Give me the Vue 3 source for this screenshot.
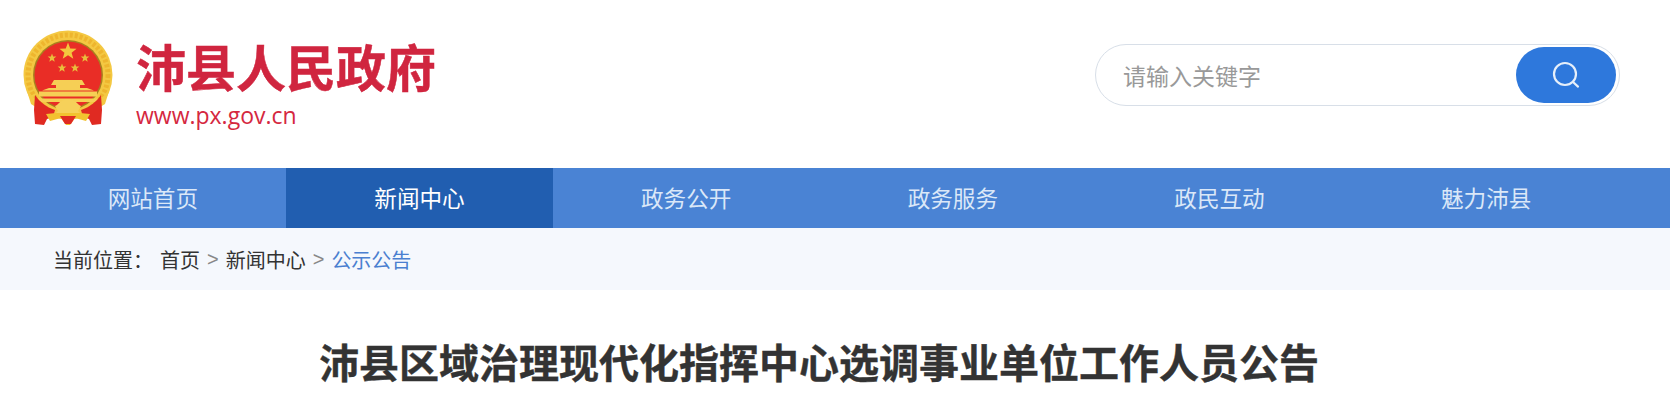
<template>
  <div class="page">
    <header class="top">
      <div class="brand">
        <svg class="emblem" viewBox="0 0 90 96" width="90" height="96">
          <circle cx="45" cy="45" r="44.5" fill="#f4c842" />
          <circle cx="45" cy="45" r="40" fill="none" stroke="#eeb52e" stroke-width="5" stroke-dasharray="3 2" />
          <circle cx="45" cy="45" r="35" fill="#a8801f" />
          <circle cx="45" cy="45" r="33.5" fill="#e92d26" />
          <polygon fill="#f3c63e" :points="starPoints(45, 21.5, 9)" />
          <polygon v-for="s in smallStars" :key="s.x" fill="#e9bd3c" :points="starPoints(s.x, s.y, 4.6)" />
          <path fill="#f6cf55" d="M31 50h28l3 5h-5v3h7l7 2.5H19L26 58h7v-3h-5z" />
          <rect x="16" y="61.5" width="58" height="5" fill="#f6cf55" />
          <rect x="14" y="68.5" width="62" height="3.5" fill="#f6cf55" />
          <path fill="#f4c842" d="M3 58c9 13 19 20 31 22h22c12-2 22-9 31-22l-5 16-16 10H24L8 74z" />
          <path fill="#e02a22" d="M12 65c5 7 11 12 20 15l-2 7-6 2-3 6-9-1-1-14z" />
          <path fill="#e02a22" d="M78 65c-5 7-11 12-20 15l2 7 6 2 3 6 9-1 1-14z" />
          <path fill="#f6d15a" d="M32 76c3-1 4-4 7-5 2-2 10-2 12 0 3 1 4 4 7 5l-3 5 2 2H33l2-2z" />
          <path fill="#f2c230" d="M23 84l10-1h24l10 1-4 7-11-3-5 7h-4l-5-7-11 3z" />
          <path fill="#e02a22" d="M37 86h16l-5 8h-6z" />
        </svg>
        <div class="brand-text">
          <div class="site-name">沛县人民政府</div>
          <div class="site-url">www.px.gov.cn</div>
        </div>
      </div>
      <form class="search" @submit.prevent>
        <input v-model="keyword" class="search-input" type="text" placeholder="请输入关键字" />
        <button class="search-btn" type="submit" aria-label="搜索">
          <svg viewBox="0 0 28 28" width="28" height="28" fill="none" stroke="#e6effa" stroke-width="2.2" stroke-linecap="round">
            <circle cx="13" cy="13" r="11" />
            <path d="M21 21l5 4.6" />
          </svg>
        </button>
      </form>
    </header>

    <nav class="nav">
      <ul class="nav-list">
        <li v-for="item in navItems" :key="item" class="nav-item" :class="{ active: item === current }">{{ item }}</li>
      </ul>
    </nav>

    <div class="crumbs">
      <div class="crumbs-inner">
        <span class="crumb-label">当前位置：</span>
        <span>首页</span>
        <span class="sep">&gt;</span>
        <span>新闻中心</span>
        <span class="sep">&gt;</span>
        <span class="crumb-last">公示公告</span>
      </div>
    </div>

    <h1 class="title">沛县区域治理现代化指挥中心选调事业单位工作人员公告</h1>
  </div>
</template>

<script setup>
import { ref } from 'vue'

const keyword = ref('')
const current = '新闻中心'
const navItems = ['网站首页', '新闻中心', '政务公开', '政务服务', '政民互动', '魅力沛县']
const smallStars = [
  { x: 29, y: 28 },
  { x: 62, y: 28 },
  { x: 39, y: 38 },
  { x: 52, y: 38 }
]

function starPoints(cx, cy, r) {
  const pts = []
  for (let i = 0; i < 10; i++) {
    const rad = i % 2 ? r * 0.42 : r
    const a = -Math.PI / 2 + (i * Math.PI) / 5
    pts.push(`${(cx + rad * Math.cos(a)).toFixed(2)},${(cy + rad * Math.sin(a)).toFixed(2)}`)
  }
  return pts.join(' ')
}
</script>

<style>
html, body { margin: 0; background: #fff; overflow: hidden; }
</style>

<style scoped>
.page { font-family: "Noto Sans CJK SC", "Liberation Sans", sans-serif; color: #333; }
.top { width: 1600px; height: 168px; margin-left: 20px; display: flex; justify-content: space-between; align-items: flex-start; box-sizing: border-box; }
.brand { display: flex; align-items: flex-start; padding-top: 30px; }
.emblem { display: block; margin-left: 3px; }
.brand-text { margin-left: 23px; }
.site-name { font-size: 50px; font-weight: 700; line-height: 60px; margin-top: 5px; color: #d0253f; -webkit-text-stroke: 0.5px #d0253f; }
.site-url { font-family: "Open Sans", "Liberation Sans", sans-serif; font-size: 23px; line-height: 28px; margin-top: 6px; color: #d5283f; }
.search { width: 525px; height: 62px; margin-top: 44px; display: flex; align-items: center; justify-content: space-between; box-sizing: border-box; border: 1px solid #d8dfe8; border-radius: 31px; padding: 0 3px 0 27px; }
.search-input { flex: 1; min-width: 0; border: 0; outline: 0; padding: 0; font: inherit; font-size: 23px; color: #333; background: transparent; }
.search-input::placeholder { color: #999; opacity: 1; }
.search-btn { width: 100px; height: 56px; border: 0; border-radius: 28px; background: #2e78dc; display: flex; align-items: center; justify-content: center; padding: 0; }
.nav { height: 60px; background: #4a83d4; }
.nav-list { list-style: none; margin: 0 0 0 19.5px; padding: 0; width: 1600px; display: grid; grid-template-columns: repeat(6, 1fr); }
.nav-item { height: 60px; line-height: 59px; text-align: center; font-size: 22.6px; color: #dbe8f8; }
.nav-item.active { background: #215eb0; color: #fff; }
.crumbs { height: 62px; background: #f5f8fd; }
.crumbs-inner { margin-left: 53px; display: flex; align-items: center; height: 62px; font-size: 20px; color: #333; }
.crumb-label { margin-right: 7px; }
.sep { font-family: "Liberation Sans", sans-serif; color: #888; margin: 0 7px; }
.crumb-last { color: #4a7fd0; }
.title { width: 1600px; margin: 45px 0 0 19px; font-size: 40px; line-height: 52px; font-weight: 700; text-align: center; color: #333; -webkit-text-stroke: 0.4px #333; }
</style>
